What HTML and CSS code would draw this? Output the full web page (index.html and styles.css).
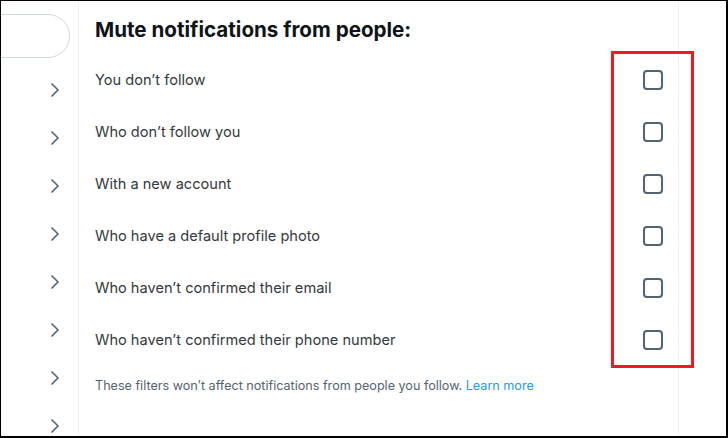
FILE: index.html
```html
<!DOCTYPE html>
<html>
<head>
<meta charset="utf-8">
<link rel="stylesheet" href="styles.css">
</head>
<body>
<div class="frame">
  <aside class="side">
    <div class="search"></div>
    <ul class="nav">
      <li><svg viewBox="0 0 10 16" class="chev"><path d="M1.5 1.5 L8 8 L1.5 14.5"/></svg></li>
      <li><svg viewBox="0 0 10 16" class="chev"><path d="M1.5 1.5 L8 8 L1.5 14.5"/></svg></li>
      <li><svg viewBox="0 0 10 16" class="chev"><path d="M1.5 1.5 L8 8 L1.5 14.5"/></svg></li>
      <li><svg viewBox="0 0 10 16" class="chev"><path d="M1.5 1.5 L8 8 L1.5 14.5"/></svg></li>
      <li><svg viewBox="0 0 10 16" class="chev"><path d="M1.5 1.5 L8 8 L1.5 14.5"/></svg></li>
      <li><svg viewBox="0 0 10 16" class="chev"><path d="M1.5 1.5 L8 8 L1.5 14.5"/></svg></li>
      <li><svg viewBox="0 0 10 16" class="chev"><path d="M1.5 1.5 L8 8 L1.5 14.5"/></svg></li>
      <li><svg viewBox="0 0 10 16" class="chev"><path d="M1.5 1.5 L8 8 L1.5 14.5"/></svg></li>
    </ul>
  </aside>
  <main class="main">
    <h2 class="title">Mute notifications from people:</h2>
    <div class="row"><span>You don’t follow</span><span class="box"></span></div>
    <div class="row"><span>Who don’t follow you</span><span class="box"></span></div>
    <div class="row"><span>With a new account</span><span class="box"></span></div>
    <div class="row"><span>Who have a default profile photo</span><span class="box"></span></div>
    <div class="row"><span>Who haven’t confirmed their email</span><span class="box"></span></div>
    <div class="row"><span>Who haven’t confirmed their phone number</span><span class="box"></span></div>
    <p class="note">These filters won’t affect notifications from people you follow. <a href="#">Learn more</a></p>
  </main>
  <div class="rest"></div>
  <div class="highlight"></div>
</div>
</body>
</html>
```
FILE: styles.css
```css
* { box-sizing: border-box; }
html, body { margin: 0; padding: 0; background: #fff; }
body { font-family: Inter, "Noto Sans", "Liberation Sans", sans-serif; }
.frame {
  position: relative;
  width: 728px;
  height: 438px;
  border-top: 1px solid #000;
  border-left: 1px solid #000;
  border-right: 2px solid #000;
  border-bottom: 2px solid #000;
  display: flex;
  overflow: hidden;
}
.side {
  width: 78px;
  flex: none;
  border-right: 1px solid #eff3f4;
}
.search {
  margin-top: 13px;
  margin-left: -40px;
  width: 109px;
  height: 44px;
  border: 1px solid #cfd9de;
  border-radius: 22px;
}
.nav {
  list-style: none;
  margin: 8px 0 0;
  padding: 0;
}
.nav li {
  height: 48px;
  display: flex;
  align-items: center;
  padding-left: 49px;
}
.chev {
  width: 10px;
  height: 16px;
  fill: none;
  stroke: #536471;
  stroke-width: 1.6;
}
.main {
  width: 600px;
  flex: none;
  border-right: 1px solid #eff3f4;
  padding: 0 16px;
}
.title {
  margin: 16px 0 0;
  font-size: 20.6px;
  line-height: 26px;
  font-weight: 700;
  color: #0f1419;
  letter-spacing: 0;
  height: 37px;
}
.row {
  height: 52px;
  display: flex;
  align-items: center;
  justify-content: space-between;
  font-size: 14.6px;
  color: #34393d;
}
.box {
  width: 20px;
  height: 20px;
  border: 2px solid #536471;
  border-radius: 4px;
  margin-right: -1px;
}
.note {
  margin: 12px 0 0;
  font-size: 12.6px;
  line-height: 16px;
  color: #536471;
}
.note a { color: #1d9bf0; text-decoration: none; }
.rest { flex: 1; }
.highlight {
  position: absolute;
  left: 610px;
  top: 50px;
  width: 83px;
  height: 317px;
  border: 3px solid #ed1c24;
}
```
